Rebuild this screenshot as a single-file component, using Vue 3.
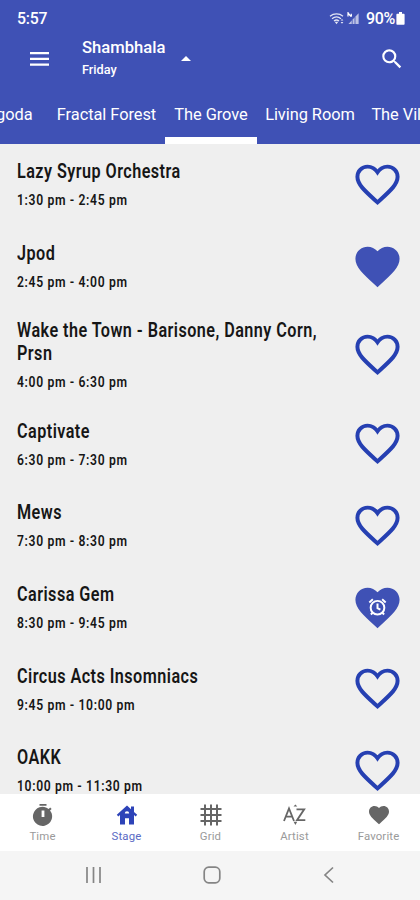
<template>
  <div class="screen">
    <header class="app-header">
      <div class="status-bar">
        <span class="clock">5:57</span>
        <div class="status-icons">
          <svg class="wifi" viewBox="0 0 16 13">
            <path d="M1 4.2a10.5 10.5 0 0 1 13 0M3 6.7a7.3 7.3 0 0 1 9 0M5 9a4 4 0 0 1 5 0" />
            <path class="solid" d="M7.5 12.2L5.7 9.8h3.6zM11.6 8.6l1.4-1.6 1.4 1.6zM11.6 10l1.4 1.7 1.4-1.7z" />
          </svg>
          <svg class="signal" viewBox="0 0 13 13">
            <path d="M11.6 1.2V12H1.4z" opacity="0.65" />
            <path d="M1 0v4.5M1 1l3 3.5M4.3 1.7v3" stroke="#fff" stroke-width="1.2" />
            <path d="M5.2 8v4M8 5v7" stroke="#3f51b5" stroke-width="0.8" />
          </svg>
          <span class="percent">90%</span>
          <svg class="battery" viewBox="0 0 9 13">
            <path d="M3 0h3v1.7h1.6c.6 0 1 .4 1 1V11.8c0 .6-.4 1-1 1H1.4c-.6 0-1-.4-1-1V2.7c0-.6.4-1 1-1H3z" />
          </svg>
        </div>
      </div>

      <div class="toolbar">
        <svg class="menu" viewBox="0 0 20 14">
          <path d="M0 0h19v2.2H0zM0 5.8h19V8H0zM0 11.6h19v2.2H0z" />
        </svg>
        <div class="heading">
          <div class="festival">Shambhala</div>
          <div class="day">Friday</div>
        </div>
        <svg class="caret" viewBox="0 0 10 5"><path d="M0 5l5-5 5 5z" /></svg>
        <svg class="search" viewBox="0 0 24 24">
          <path d="M15.5 14h-.79l-.28-.27A6.47 6.47 0 0 0 16 9.5 6.5 6.5 0 1 0 9.5 16c1.61 0 3.09-.59 4.23-1.57l.27.28v.79l5 4.99L20.49 19l-4.99-5zm-6 0C7.01 14 5 11.99 5 9.5S7.01 5 9.5 5 14 7.01 14 9.5 11.99 14 9.5 14z" />
        </svg>
      </div>

      <nav class="tabs">
        <div
          v-for="tab in tabs"
          :key="tab.name"
          class="tab"
          :class="{ selected: tab.name === stage }"
          :style="{ width: tab.width + 'px' }"
          @click="stage = tab.name"
        >{{ tab.name }}</div>
      </nav>
    </header>

    <main class="list">
      <div v-for="(show, idx) in shows" :key="idx" class="row" :class="{ tall: show.tall }">
        <div class="info">
          <div class="artist">{{ show.artist }}</div>
          <div class="time">{{ show.time }}</div>
        </div>
        <svg class="heart" viewBox="0 0 24 24" @click="toggle(show)">
          <path v-if="show.liked" class="fill" :d="heartPath" />
          <path v-else class="outline" :d="heartOutline" />
          <g v-if="show.alarm" class="alarm">
            <circle cx="12" cy="12.1" r="3.1" />
            <path d="M12 10.2v2.1l1.3.7M8.3 9.7l1.6-1.4M15.7 9.7l-1.6-1.4M9.8 14.4l-.8.8M14.2 14.4l.8.8" />
          </g>
        </svg>
      </div>
    </main>

    <nav class="bottom-nav">
      <div
        v-for="item in navItems"
        :key="item"
        class="nav-item"
        :class="{ active: item === 'Stage' }"
      >
        <svg v-if="item === 'Time'" viewBox="0 0 24 24">
          <path d="M8.5 1h7v1.8h-7zM19.03 7.39l1.6-1.5-1.4-1.42-1.6 1.5A9.6 9.6 0 1 0 19.03 7.39zM13.4 14h-2.8V7.5h2.8z" />
        </svg>
        <svg v-else-if="item === 'Stage'" viewBox="0 0 24 24">
          <path d="M12 2.5L1.8 11.8l1.5 1.7L5 12v9.5h5v-6.3h4v6.3h5V12l1.7 1.5 1.5-1.7-3.2-2.9V3.5h-3v2.7zM9.8 10.5a2.2 2.2 0 0 1 4.4 0z" />
        </svg>
        <svg v-else-if="item === 'Grid'" viewBox="0 0 24 24">
          <path d="M6 1.5v21M12 1.5v21M18 1.5v21M1.5 6h21M1.5 12h21M1.5 18h21" fill="none" stroke="currentColor" stroke-width="2" />
        </svg>
        <svg v-else-if="item === 'Artist'" viewBox="0 0 24 24">
          <path d="M1 18L6 5.5 11 18M2.8 13.7h6.4M13.5 6.3h7.7L14 17.2h8.3" fill="none" stroke="currentColor" stroke-width="1.8" />
          <path d="M10.5 3.4l1.9-2 1.9 2zM10.6 18.8l1.8 3.2 1.8-3.2z" />
        </svg>
        <svg v-else viewBox="0 0 24 24"><path :d="heartPath" /></svg>
        <span>{{ item }}</span>
      </div>
    </nav>

    <div class="system-nav">
      <svg viewBox="0 0 18 18"><path d="M2 1v16M8.5 1v16M15 1v16" /></svg>
      <svg viewBox="0 0 18 18"><rect x="1.2" y="1.2" width="15.6" height="15.6" rx="4.5" /></svg>
      <svg viewBox="0 0 18 18"><path d="M13 1.5L5 9l8 7.5" /></svg>
    </div>
  </div>
</template>

<script setup>
import { ref } from 'vue'

const heartPath = 'M12 21.35l-1.45-1.32C5.4 15.36 2 12.28 2 8.5 2 5.42 4.42 3 7.5 3c1.74 0 3.41.81 4.5 2.09C13.09 3.81 14.76 3 16.5 3 19.58 3 22 5.42 22 8.5c0 3.78-3.4 6.86-8.55 11.54L12 21.35z'
const heartOutline = 'M12 20.1l-1.2-1.1C6.1 14.75 2.9 11.85 2.9 8.5 2.9 5.9 4.9 3.9 7.5 3.9c1.75 0 3.4.9 4.5 2.55 1.1-1.65 2.75-2.55 4.5-2.55 2.6 0 4.6 2 4.6 4.6 0 3.35-3.2 6.25-7.9 10.5z'

const stage = ref('The Grove')
const tabs = [
  { name: 'Pagoda', width: 71 },
  { name: 'Fractal Forest', width: 117 },
  { name: 'The Grove', width: 92 },
  { name: 'Living Room', width: 106 },
  { name: 'The Village', width: 97 }
]

const shows = ref([
  { artist: 'Lazy Syrup Orchestra', time: '1:30 pm - 2:45 pm' },
  { artist: 'Jpod', time: '2:45 pm - 4:00 pm', liked: true },
  { artist: 'Wake the Town - Barisone, Danny Corn, Prsn', time: '4:00 pm - 6:30 pm', tall: true },
  { artist: 'Captivate', time: '6:30 pm - 7:30 pm' },
  { artist: 'Mews', time: '7:30 pm - 8:30 pm' },
  { artist: 'Carissa Gem', time: '8:30 pm - 9:45 pm', liked: true, alarm: true },
  { artist: 'Circus Acts Insomniacs', time: '9:45 pm - 10:00 pm' },
  { artist: 'OAKK', time: '10:00 pm - 11:30 pm' }
])

const navItems = ['Time', 'Stage', 'Grid', 'Artist', 'Favorite']

function toggle(show) {
  show.liked = !show.liked
  show.alarm = false
}
</script>

<style>
body {
  margin: 0;
}
</style>

<style scoped>
.screen {
  display: flex;
  flex-direction: column;
  width: 420px;
  height: 900px;
  overflow: hidden;
  background: #efefef;
  font-family: Roboto, sans-serif;
}

.app-header {
  flex: none;
  height: 143.5px;
  background: #3f51b5;
  color: #fff;
}

.status-bar {
  display: flex;
  justify-content: space-between;
  align-items: center;
  height: 37px;
  padding: 0 15px 0 17px;
  box-sizing: border-box;
}

.clock {
  font-size: 15.8px;
  font-weight: 500;
  letter-spacing: -0.2px;
}

.status-icons {
  display: flex;
  align-items: center;
}

.status-icons svg {
  fill: #fff;
}

.wifi {
  width: 16px;
  height: 13px;
  opacity: 0.85;
}

.status-icons .wifi {
  fill: none;
  stroke: #fff;
  stroke-width: 1.3;
}

.wifi .solid {
  fill: #fff;
  stroke: none;
}

.signal {
  width: 13px;
  height: 13px;
  margin-left: 2px;
}

.percent {
  margin: 0 1px 0 6px;
  font-size: 16px;
  font-weight: 500;
  letter-spacing: -0.3px;
}

.battery {
  width: 9px;
  height: 13px;
}

.toolbar {
  display: flex;
  align-items: center;
  height: 51px;
  padding: 0 15px 8px 30px;
  box-sizing: border-box;
}

.toolbar svg {
  fill: #fff;
}

.menu {
  width: 20px;
  height: 14px;
}

.heading {
  width: 84px;
  margin-left: 32px;
}

.festival {
  font-size: 16.6px;
  font-weight: 500;
  line-height: 22px;
}

.day {
  font-size: 12.7px;
  font-weight: 500;
  line-height: 21px;
}

.caret {
  width: 10px;
  height: 5px;
  margin-left: 15px;
}

.search {
  width: 26px;
  height: 26px;
  margin-left: auto;
}

.tabs {
  display: flex;
  height: 55.5px;
  margin-left: -23px;
  overflow: hidden;
}

.tab {
  flex: none;
  height: 100%;
  box-sizing: border-box;
  padding-top: 15px;
  font-size: 16.4px;
  line-height: 24px;
  letter-spacing: -0.05px;
  text-align: center;
  white-space: nowrap;
  cursor: pointer;
}

/* scrolled most of the way off the left side */
.tab:first-child {
  padding-right: 17px;
  direction: ltr;
  text-align: right;
}

.tab.selected {
  border-bottom: 7.5px solid #fff;
}

.list {
  flex: 1;
  min-height: 0;
  overflow: hidden;
}

.row {
  display: flex;
  justify-content: space-between;
  align-items: center;
  height: 81.7px;
  padding: 0 16px 0 17px;
  box-sizing: border-box;
}

.row.tall {
  height: 96px;
}

.info {
  padding-top: 3px;
  color: #161616;
  font-weight: 600;
}

/* narrow lettering, squeezed from the left edge */
.artist,
.time {
  transform: scaleX(0.81);
  transform-origin: left center;
}

.artist {
  width: 384px;
  margin-right: -84px;
  font-size: 20px;
  line-height: 23px;
  letter-spacing: 0.55px;
}

.time {
  margin-top: 6px;
  font-size: 15px;
  line-height: 22px;
  letter-spacing: 0.8px;
}

.heart {
  flex: none;
  width: 53px;
  height: 53px;
}

.heart .fill {
  fill: #3f51b5;
}

.heart .outline {
  fill: none;
  stroke: #2640b2;
  stroke-width: 1.8;
}

.alarm {
  fill: none;
  stroke: #fff;
  stroke-width: 0.9;
}

.bottom-nav {
  display: flex;
  flex: none;
  height: 57px;
  background: #fff;
}

.nav-item {
  display: flex;
  flex: 1;
  flex-direction: column;
  align-items: center;
  padding: 9px 0 0 1px;
  color: #9a9a9a;
}

.nav-item svg {
  width: 24px;
  height: 24px;
  color: #666;
  fill: currentColor;
}

.nav-item span {
  margin-top: 1px;
  font-size: 11.4px;
  line-height: 16px;
  letter-spacing: 0.15px;
}

.nav-item.active,
.nav-item.active svg {
  color: #2d43b8;
}

.nav-item.active span {
  color: #5a6ac4;
}

.system-nav {
  display: flex;
  flex: none;
  justify-content: space-between;
  height: 49px;
  padding: 15px 82px 0 85px;
  box-sizing: border-box;
  background: #f5f5f5;
}

.system-nav svg {
  width: 18px;
  height: 18px;
  fill: none;
  stroke: #858585;
  stroke-width: 1.7;
}
</style>
